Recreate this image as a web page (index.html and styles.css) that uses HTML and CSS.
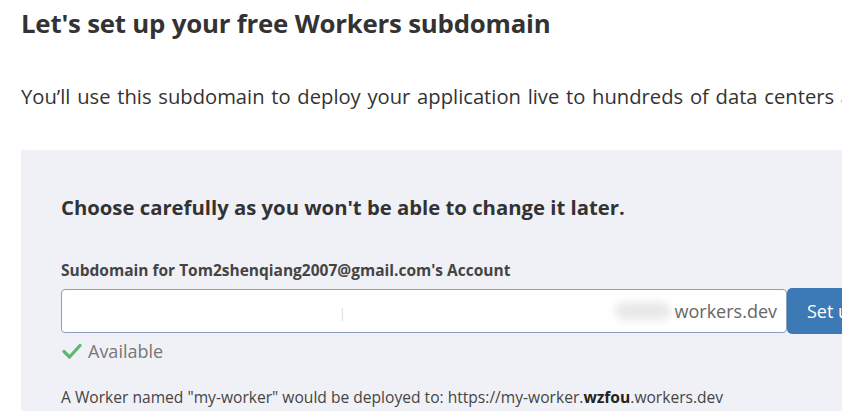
FILE: index.html
```html
<!DOCTYPE html>
<html>
<head>
<meta charset="utf-8">
<link rel="stylesheet" href="styles.css">
</head>
<body>
<div class="page">
  <h1 class="title">Let's set up your free Workers subdomain</h1>
  <p class="intro">You’ll use this subdomain to deploy your application live to hundreds of data centers around the world.</p>
  <div class="panel">
    <h2 class="panel-title">Choose carefully as you won't be able to change it later.</h2>
    <label class="field-label">Subdomain for Tom2shenqiang2007@gmail.com's Account</label>
    <div class="field-row">
      <div class="input-box">
        <span class="caret">I</span>
        <span class="blur"></span>
        <span class="suffix">workers.dev</span>
      </div>
      <button class="btn">Set up</button>
    </div>
    <div class="status">
      <svg class="check" viewBox="0 0 20 16" width="20" height="16"><path d="M2 8.5 L7.5 14 L18 2.5" fill="none" stroke="#5cb874" stroke-width="3.2" stroke-linecap="round" stroke-linejoin="round"/></svg>
      <span>Available</span>
    </div>
    <p class="note">A Worker named "my-worker" would be deployed to: https://my-worker.<b>wzfou</b>.workers.dev</p>
  </div>
</div>
</body>
</html>
```
FILE: styles.css
```css
html, body {
  margin: 0;
  padding: 0;
  background: #ffffff;
  overflow: hidden;
}
body {
  font-family: "Open Sans", "Noto Sans", sans-serif;
  color: #333;
}
.page {
  padding: 0 0 0 21px;
  width: 1200px;
}
.title {
  margin: 0;
  padding-top: 6px;
  font-size: 25.8px;
  font-weight: 700;
  line-height: 34px;
  color: #333;
  letter-spacing: -0.2px;
}
.intro {
  margin: 43px 0 0 0;
  font-size: 20.2px;
  line-height: 26px;
  word-spacing: 1.5px;
  color: #333;
  white-space: nowrap;
}
.panel {
  margin-top: 41px;
  background: #f0f1f6;
  padding: 43px 40px 20px 40px;
}
.panel-title {
  margin: 0;
  font-size: 20.3px;
  font-weight: 700;
  line-height: 28px;
  color: #333;
}
.field-label {
  display: block;
  margin-top: 39px;
  font-size: 15.5px;
  font-weight: 700;
  line-height: 20px;
  color: #444;
}
.field-row {
  display: flex;
  margin-top: 8px;
  align-items: center;
}
.input-box {
  width: 726px;
  height: 44px;
  box-sizing: border-box;
  border: 1px solid #8aa0b8;
  border-radius: 4px;
  background: #fff;
  display: flex;
  align-items: center;
  justify-content: flex-end;
  padding-right: 9px;
  position: relative;
}
.caret {
  position: absolute;
  left: 278px;
  top: 12px;
  color: #ddd;
  font-weight: 300;
  font-size: 18px;
}
.blur {
  width: 56px;
  height: 18px;
  background: #e8e8e8;
  border-radius: 9px;
  filter: blur(4px);
  margin-right: 4px;
}
.suffix {
  font-size: 18px;
  color: #666;
}
.btn {
  height: 46px;
  margin-left: 0;
  border: 0;
  border-radius: 5px;
  background: #3b7ab4;
  color: #fff;
  font-family: inherit;
  font-size: 18px;
  padding: 0 20px;
  white-space: nowrap;
}
.status {
  display: flex;
  align-items: center;
  gap: 6px;
  margin-top: 5px;
  font-size: 18px;
  line-height: 24px;
  color: #777;
}
.check {
  margin-left: 1px;
}
.note {
  margin: 24px 0 0 0;
  font-size: 15.6px;
  line-height: 20px;
  color: #444;
  white-space: nowrap;
}
.note b {
  color: #222;
}
```
